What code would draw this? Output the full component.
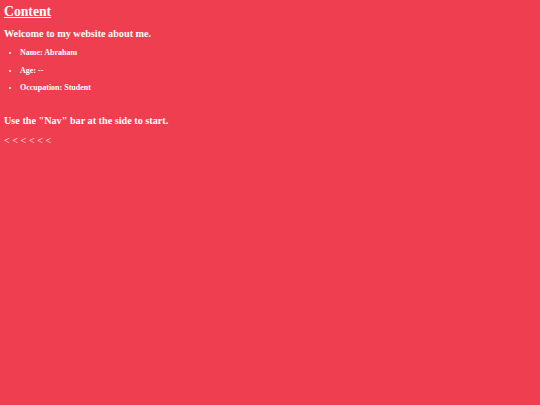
export default function App() {
  return (
    <div className="min-h-[405px] bg-[#ee3e4f] px-[4px] py-[3px] text-white font-['Liberation_Serif',serif] font-bold">
      <h1 className="text-[13.7px] leading-[18px] underline">Content</h1>
      <h2 className="mt-[7px] text-[10.2px] leading-[12px]">Welcome to my website about me.</h2>
      <ul className="mt-[4px] list-disc pl-[16px] text-[8px] leading-[17.5px]">
        <li>Name: Abraham</li>
        <li>Age: --</li>
        <li>Occupation: Student</li>
      </ul>
      <h2 className="mt-[18px] text-[10.2px] leading-[12px]">Use the "Nav" bar at the side to start.</h2>
      <p className="mt-[8px] text-[10.2px] leading-[12px] font-normal">&lt; &lt; &lt; &lt; &lt; &lt;</p>
    </div>
  )
}
